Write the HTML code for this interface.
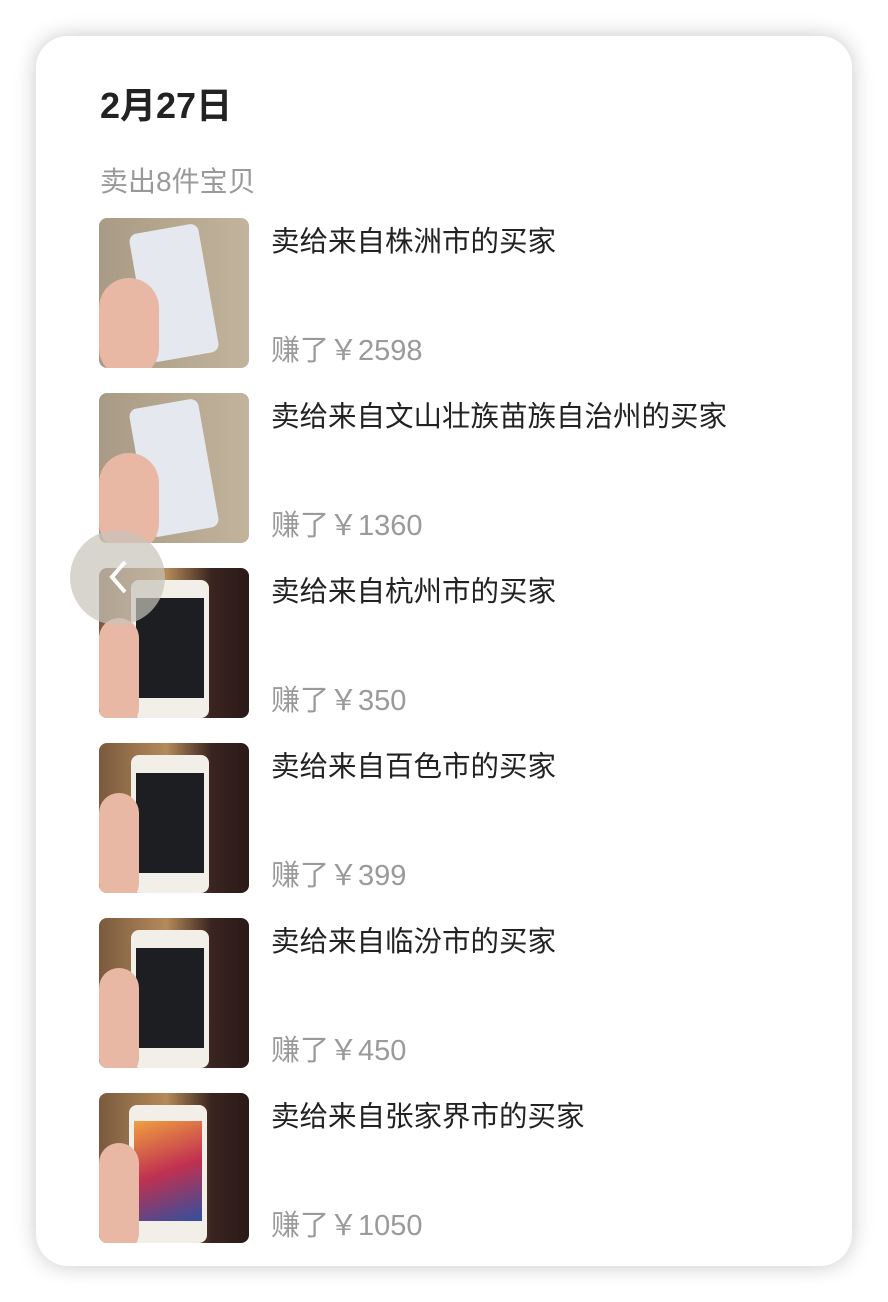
<!DOCTYPE html>
<html><head><meta charset="utf-8"><style>
*{margin:0;padding:0;box-sizing:border-box}
body{width:888px;height:1302px;background:#fff;font-family:"Liberation Sans","Noto Sans CJK SC",sans-serif;position:relative;overflow:hidden}
.card{position:absolute;left:36px;top:36px;width:816px;height:1230px;background:#fff;border-radius:32px;box-shadow:0 0 22px rgba(0,0,0,.22)}
.date{position:absolute;left:100px;top:77px;font-size:36px;font-weight:bold;color:#222}
.sub{position:absolute;left:100px;top:160px;font-size:28px;color:#999}
.it{position:absolute;left:99px;width:700px;height:150px}
.img{position:absolute;left:0;top:0;width:150px;height:150px;border-radius:8px;overflow:hidden}
.t{position:absolute;left:172px;top:1px;font-size:28.5px;color:#222;white-space:nowrap}
.p{position:absolute;left:172px;top:109px;font-size:29px;color:#9a9a9a}
.a{background:linear-gradient(90deg,#a89a84,#c2b49c)}
.b{background:linear-gradient(90deg,#7a5a3e 0%,#b48a5a 45%,#3a2420 75%,#2a1a18 100%)}
.ph{position:absolute;border-radius:8px}
.hand{position:absolute;background:#e8b8a4;border-radius:40px}
.back{position:absolute;left:70px;top:530px;width:95px;height:95px;border-radius:50%;background:rgba(200,195,185,.7)}
</style></head><body>
<div class="card"></div>
<div class="date">2月27日</div>
<div class="sub">卖出8件宝贝</div>

<div class="it" style="top:218px"><div class="img a"><div class="ph" style="left:40px;top:10px;width:70px;height:130px;background:#e6e8f0;transform:rotate(-10deg)"></div><div class="hand" style="left:0;top:60px;width:60px;height:100px"></div></div><div class="t">卖给来自株洲市的买家</div><div class="p">赚了￥2598</div></div>
<div class="it" style="top:393px"><div class="img a"><div class="ph" style="left:40px;top:10px;width:70px;height:130px;background:#e6e8f0;transform:rotate(-10deg)"></div><div class="hand" style="left:0;top:60px;width:60px;height:100px"></div></div><div class="t">卖给来自文山壮族苗族自治州的买家</div><div class="p">赚了￥1360</div></div>
<div class="it" style="top:568px"><div class="img b"><div class="ph" style="left:32px;top:12px;width:78px;height:138px;background:#f2efe8"></div><div class="ph" style="left:37px;top:30px;width:68px;height:100px;background:#1d1e22;border-radius:0"></div><div class="hand" style="left:0;top:50px;width:40px;height:110px"></div></div><div class="t">卖给来自杭州市的买家</div><div class="p">赚了￥350</div></div>
<div class="it" style="top:743px"><div class="img b"><div class="ph" style="left:32px;top:12px;width:78px;height:138px;background:#f2efe8"></div><div class="ph" style="left:37px;top:30px;width:68px;height:100px;background:#1d1e22;border-radius:0"></div><div class="hand" style="left:0;top:50px;width:40px;height:110px"></div></div><div class="t">卖给来自百色市的买家</div><div class="p">赚了￥399</div></div>
<div class="it" style="top:918px"><div class="img b"><div class="ph" style="left:32px;top:12px;width:78px;height:138px;background:#f2efe8"></div><div class="ph" style="left:37px;top:30px;width:68px;height:100px;background:#1d1e22;border-radius:0"></div><div class="hand" style="left:0;top:50px;width:40px;height:110px"></div></div><div class="t">卖给来自临汾市的买家</div><div class="p">赚了￥450</div></div>
<div class="it" style="top:1093px"><div class="img b"><div class="ph" style="left:30px;top:12px;width:78px;height:138px;background:#f2efe8"></div><div class="ph" style="left:35px;top:28px;width:68px;height:100px;background:linear-gradient(160deg,#f0a040,#c03050 50%,#3050a0);border-radius:0"></div><div class="hand" style="left:0;top:50px;width:40px;height:110px"></div></div><div class="t">卖给来自张家界市的买家</div><div class="p">赚了￥1050</div></div>

<div class="back"><svg width="95" height="95" viewBox="0 0 95 95"><path d="M55 32 L42 47 L55 62" stroke="#fff" stroke-width="4" fill="none"/></svg></div>
</body></html>
